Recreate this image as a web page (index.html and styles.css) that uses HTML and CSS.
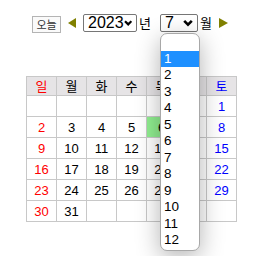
FILE: index.html
```html
<!DOCTYPE html>
<html lang="ko">
<head>
    <meta charset="UTF-8">
    <meta name="viewport" content="width=device-width, initial-scale=1.0">
    <link rel="stylesheet" href="styles.css">
    <title>달력</title>
</head>
<body>
    <div class="calendar">
        <div class="nav">
            <button type="button" class="today">오늘</button>
            <span class="arrow prev"></span>
            <div class="select year">
                <span>2023</span>
                <svg class="chev" width="10" height="8" viewBox="0 0 10 8"><path d="M1.2 1.8 L5 5.6 L8.8 1.8" fill="none" stroke="#000" stroke-width="2.6"/></svg>
            </div>
            <span class="unit">년</span>
            <div class="select month">
                <span>7</span>
                <svg class="chev" width="10" height="8" viewBox="0 0 10 8"><path d="M1.2 1.8 L5 5.6 L8.8 1.8" fill="none" stroke="#000" stroke-width="2.6"/></svg>
                <ul class="options">
                    <li></li>
                    <li class="active">1</li>
                    <li>2</li>
                    <li>3</li>
                    <li>4</li>
                    <li>5</li>
                    <li>6</li>
                    <li>7</li>
                    <li>8</li>
                    <li>9</li>
                    <li>10</li>
                    <li>11</li>
                    <li>12</li>
                </ul>
            </div>
            <span class="unit">월</span>
            <span class="arrow next"></span>
        </div>

        <table class="days">
            <thead>
                <tr>
                    <th class="sun">일</th>
                    <th>월</th>
                    <th>화</th>
                    <th>수</th>
                    <th>목</th>
                    <th>금</th>
                    <th class="sat">토</th>
                </tr>
            </thead>
            <tbody>
                <tr>
                    <td></td><td></td><td></td><td></td><td></td><td></td><td class="sat">1</td>
                </tr>
                <tr>
                    <td class="sun">2</td><td>3</td><td>4</td><td>5</td><td class="now">6</td><td>7</td><td class="sat">8</td>
                </tr>
                <tr>
                    <td class="sun">9</td><td>10</td><td>11</td><td>12</td><td>13</td><td>14</td><td class="sat">15</td>
                </tr>
                <tr>
                    <td class="sun">16</td><td>17</td><td>18</td><td>19</td><td>20</td><td>21</td><td class="sat">22</td>
                </tr>
                <tr>
                    <td class="sun">23</td><td>24</td><td>25</td><td>26</td><td>27</td><td>28</td><td class="sat">29</td>
                </tr>
                <tr>
                    <td class="sun">30</td><td>31</td><td></td><td></td><td></td><td></td><td></td>
                </tr>
            </tbody>
        </table>
    </div>
</body>
</html>
```

FILE: styles.css
```css
html, body {
    min-height: 100vh;
}

body {
    margin: 0;
    background: #fff;
    font-family: "Liberation Sans", "Noto Sans CJK KR", sans-serif;
    color: #000;
}

.calendar {
    min-height: 256px;
    padding: 14px 0 0 26px;
    box-sizing: border-box;
}

.nav {
    display: flex;
    align-items: center;
    height: 18px;
    padding-left: 6px;
}

.today {
    width: 29px;
    height: 17px;
    margin-top: 2px;
    padding: 0;
    font-family: "Noto Sans CJK KR", sans-serif;
    font-size: 11px;
    line-height: 15px;
    color: #333;
    background: #fafafa;
    border: 1px solid #b4b4b4;
    border-radius: 0;
}

.arrow {
    width: 0;
    height: 0;
    border-top: 5px solid transparent;
    border-bottom: 5px solid transparent;
}

.prev {
    margin: 0 7px 0 7px;
    border-right: 8px solid #808000;
}

.next {
    margin-left: 7px;
    border-left: 9px solid #808000;
}

.select {
    position: relative;
    display: flex;
    align-items: center;
    justify-content: space-between;
    height: 18px;
    padding: 0 4px 0 4px;
    border: 1px solid #767676;
    border-radius: 2px;
    font-size: 16px;
    box-sizing: border-box;
}

.year {
    width: 54px;
}

.month {
    width: 38px;
    margin-left: 9px;
}

.unit {
    margin-left: 2px;
    font-family: "Noto Sans CJK KR", sans-serif;
    font-size: 13px;
    line-height: 18px;
}

.options {
    position: absolute;
    top: 18px;
    left: -1px;
    width: 38px;
    margin: 0;
    padding: 0 0 1px;
    list-style: none;
    background: #fff;
    border: 1px solid #a8a8a8;
    border-radius: 7px;
    box-shadow: 0 6px 24px rgba(0, 0, 0, 0.3);
    z-index: 2;
}

.options li {
    height: 16.5px;
    padding-left: 3px;
    font-size: 13.5px;
    line-height: 16.5px;
}

.options li.active {
    background: #1e90ff;
    color: #fff;
}

.days {
    margin-top: 44px;
    border-collapse: collapse;
    font-size: 13px;
    text-align: center;
}

.days th,
.days td {
    width: 29px;
    padding: 0;
    border: 1px solid #c8c8c8;
}

.days th {
    height: 18px;
    background: #e6e4e6;
    font-family: "Noto Sans CJK KR", sans-serif;
    font-weight: normal;
    font-size: 13px;
    line-height: 16px;
}

.days td {
    height: 20px;
}

.sun {
    color: #f00;
}

.sat {
    color: #00f;
}

.now {
    background: #90ee90;
}
```
